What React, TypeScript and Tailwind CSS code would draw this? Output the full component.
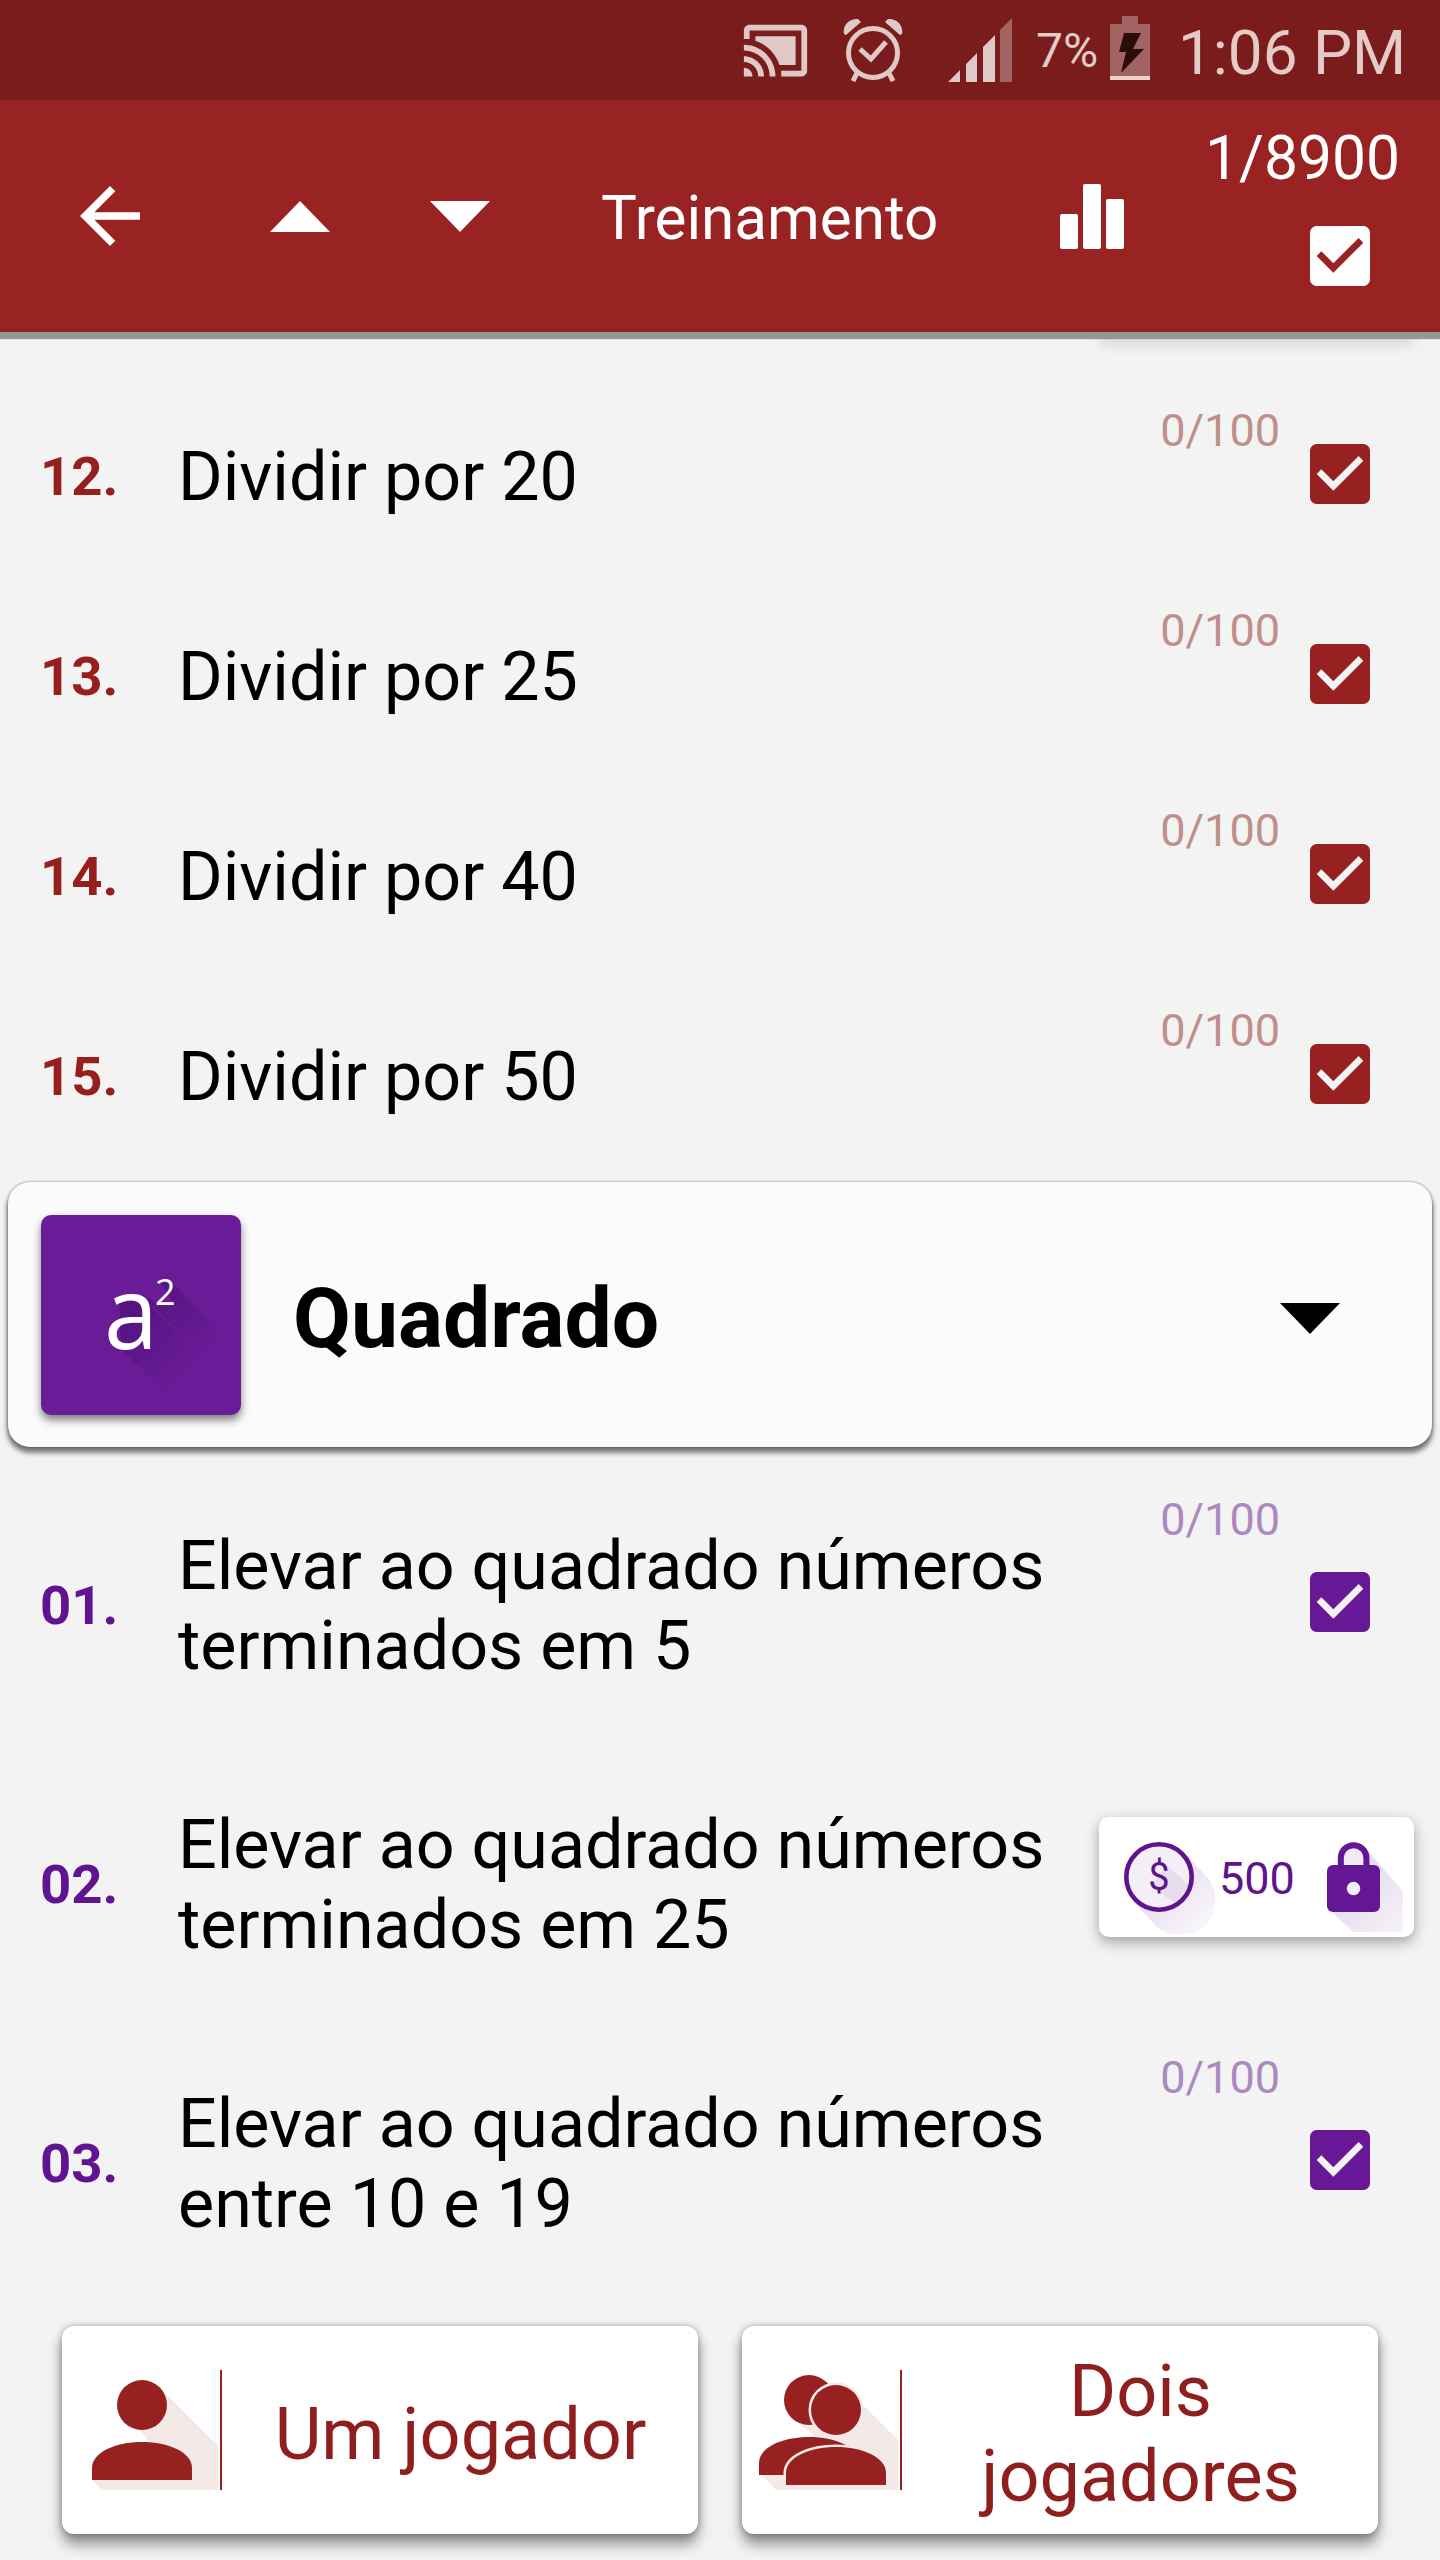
import { MdArrowBack, MdCastConnected, MdCheckBox } from "react-icons/md"

type Lesson = {
    number: string
    title: string
    locked?: boolean
}

const divisions: Lesson[] = [
    { number: "12.", title: "Dividir por 20" },
    { number: "13.", title: "Dividir por 25" },
    { number: "14.", title: "Dividir por 40" },
    { number: "15.", title: "Dividir por 50" },
]

const squares: Lesson[] = [
    { number: "01.", title: "Elevar ao quadrado números terminados em 5" },
    { number: "02.", title: "Elevar ao quadrado números terminados em 25", locked: true },
    { number: "03.", title: "Elevar ao quadrado números entre 10 e 19" },
]

const AlarmIcon = () => (
    <svg width="60" height="64" viewBox="0 0 60 64" fill="none" stroke="#dfc9c6">
        <circle cx="30" cy="35" r="24.5" strokeWidth="5" />
        <path d="M17 31l11 10 15-17" strokeWidth="5" />
        <path d="M14 55l-4 8M46 55l4 8" strokeWidth="5" />
        <path d="M1 16C-1 7 7 0 15 1l3 3L3 17zM59 16C61 7 53 0 45 1l-3 3 15 13z" fill="#dfc9c6" stroke="none" />
    </svg>
)

const SignalIcon = () => (
    <svg width="64" height="64" viewBox="0 0 64 64" fill="#dfc9c6">
        <path d="M0 64L12 52v12zM18 46l11-11v29H18zM35 29l12-12v47H35z" />
        <path d="M52 12L64 0v64H52z" fill="#a26462" />
    </svg>
)

const BatteryIcon = () => (
    <svg width="40" height="64" viewBox="0 0 40 64">
        <path d="M12 0h16v8h12v52H0V8h12z" fill="#a26462" />
        <path d="M0 60h40v4H0z" fill="#ecd2cf" />
        <path d="M14 17h17l-8 16h11L11 57l5-21H9z" fill="#2c0d0b" />
    </svg>
)

const Triangle = ({ up = false, className = "" }: { up?: boolean; className?: string }) => (
    <svg width="60" height="31" viewBox="0 0 60 31" fill="currentColor" className={className}>
        <path d={up ? "M0 31L30 0l30 31z" : "M0 0h60L30 31z"} />
    </svg>
)

const BarsIcon = () => (
    <svg width="64" height="65" viewBox="0 0 64 65" fill="#fff">
        <rect y="30" width="18" height="35" rx="2" />
        <rect x="23" width="18" height="65" rx="2" />
        <rect x="46" y="15" width="18" height="50" rx="2" />
    </svg>
)

const CoinIcon = () => (
    <svg width="92" height="92" viewBox="0 0 92 92">
        <defs>
            <linearGradient id="coin" x1="0" y1="0" x2="1" y2="1">
                <stop offset="0.3" stopColor="#e6dcee" />
                <stop offset="0.95" stopColor="#fbf9fc" />
            </linearGradient>
        </defs>
        <path d="M60 10l20 22a35 35 0 0 1-48 52L10 60z" fill="url(#coin)" />
        <circle cx="35" cy="35" r="32.7" fill="#f3eff6" />
        <path d="M43 24l24 20a32 32 0 0 1-15 18L27 44z" fill="#e6deec" />
        <circle cx="35" cy="35" r="32.7" fill="none" stroke="#5f148c" strokeWidth="4.6" />
        <text x="35" y="48" textAnchor="middle" fontFamily="Roboto" fontSize="38" fill="#5f148c">$</text>
    </svg>
)

const LockIcon = () => (
    <svg width="80" height="92" viewBox="0 0 80 92">
        <defs>
            <linearGradient id="lock" x1="0" y1="0" x2="1" y2="1">
                <stop offset="0.3" stopColor="#e3d9eb" />
                <stop offset="1" stopColor="#f7f3f9" />
            </linearGradient>
        </defs>
        <path d="M38 6l38 43v37q0 4-4 4H26L2 67z" fill="url(#lock)" />
        <path d="M14 24V17a12.7 12.7 0 0 1 25.4 0v7z" fill="#f0eaf4" />
        <path d="M13.8 26V16a12.8 12.8 0 0 1 25.6 0v10" fill="none" stroke="#641794" strokeWidth="6" />
        <rect y="23" width="53" height="47" rx="6" fill="#641794" />
        <circle cx="26.5" cy="46.5" r="6.7" fill="#f3eef6" />
    </svg>
)

const OnePlayerIcon = () => (
    <svg width="130" height="120" viewBox="0 0 130 120" fill="#962120">
        <path d="M75 25l51 51v44H10L0 110l60-34-18-24z" fill="#f3e9e7" />
        <circle cx="50" cy="35" r="25" />
        <path d="M0 110V98C0 82 24 72 50 72s50 10 50 26v12z" />
        <path d="M128 0h2v120h-2z" />
    </svg>
)

const TwoPlayersIcon = () => (
    <svg width="143" height="120" viewBox="0 0 143 120" fill="#962120">
        <path d="M101 32l38 38v50H17L4 106l60-34-26-20 38-14z" fill="#f3e9e7" />
        <circle cx="50" cy="30" r="25" />
        <path d="M0 105V93C0 77 24 67 50 67s50 10 50 26v12z" />
        <g stroke="#f3e9e7" strokeWidth="5" paintOrder="stroke">
            <circle cx="77" cy="40" r="25" />
            <path d="M27 115v-12c0-16 24-26 50-26s50 10 50 26v12z" />
        </g>
        <path d="M141 0h2v120h-2z" />
    </svg>
)

const StatusBar = () => (
    <div className="flex h-[100px] items-center bg-[#7a1c1b] pl-[741px] text-[#e5cbc8]">
        <MdCastConnected size={69} color="#dfc9c6" />
        <div className="ml-[33px]"><AlarmIcon /></div>
        <div className="ml-[45px]"><SignalIcon /></div>
        <span className="ml-[24px] w-[74px] pt-[2px] text-[48px] leading-[56px]">7%</span>
        <div className="pb-1"><BatteryIcon /></div>
        <span className="ml-[28px] pt-[5px] text-[62px] leading-[74px] whitespace-nowrap">1:06 PM</span>
    </div>
)

const Header = () => (
    <div className="relative z-10 flex h-[232px] items-center border-b-[3px] border-[#8b2322] bg-[#982322] pt-[3px] text-white shadow-[0_7px_1px_#929895]">
        <MdArrowBack size={90} className="ml-[65px]" />
        <Triangle up className="ml-[115px]" />
        <Triangle className="ml-[100px]" />
        <span className="ml-[111px] w-[459px] pt-[5px] text-[60.2px] leading-[70px]">Treinamento</span>
        <BarsIcon />
        <div className="flex flex-1 flex-col self-start pt-[21px]">
            <span className="pr-[40px] text-right text-[60.5px] leading-[70px]">1/8900</span>
            <MdCheckBox size={80} className="mt-[22px] mr-[60px] self-end" />
        </div>
    </div>
)

const UnlockButton = () => (
    <div className="mr-[26px] mb-[9px] flex h-[120px] w-[315px] items-start self-center rounded-[10px] bg-white pt-[25px] pl-[25px] shadow-[0_5px_14px_rgba(0,0,0,0.35)]">
        <CoinIcon />
        <span className="mt-[10px] ml-[3px] w-[108px] text-[45px] leading-[54px] text-[#5f148c]">500</span>
        <LockIcon />
    </div>
)

const LessonRow = ({ lesson, height, numberColor, countColor, checkColor }: {
    lesson: Lesson
    height: string
    numberColor: string
    countColor: string
    checkColor: string
}) => (
    <div className={`flex ${height}`}>
        <div className={`w-[178px] self-center pt-[4px] pl-[40px] text-[54.5px] leading-[66px] font-bold ${numberColor}`}>{lesson.number}</div>
        <div className="w-[900px] self-center pt-[6px] text-[68.2px] leading-[80px] text-black">{lesson.title}</div>
        <div className="flex flex-1 justify-end">
            {lesson.locked ? <UnlockButton /> : <>
                <span className={`pt-[30px] pr-[20px] text-[45px] leading-[54px] ${countColor}`}>0/100</span>
                <MdCheckBox size={80} className={`mr-[60px] mb-px shrink-0 self-center ${checkColor}`} />
            </>}
        </div>
    </div>
)

const SectionCard = () => (
    <div className="mx-[8px] mt-[8px] flex h-[265px] items-center rounded-[22px] bg-[#fbfbfb] pl-[33px] shadow-[0_5px_5px_1px_rgba(0,0,0,0.5),0_0_2px_1px_rgba(0,0,0,0.2)]">
        <svg width="200" height="200" viewBox="0 0 200 200" className="rounded-[10px] bg-[#6a1b97] shadow-[0_5px_8px_rgba(0,0,0,0.5)]">
            <defs>
                <linearGradient id="fade" gradientUnits="userSpaceOnUse" x1="100" y1="90" x2="155" y2="145">
                    <stop offset="0" stopColor="#551581" />
                    <stop offset="1" stopColor="#6a1b97" />
                </linearGradient>
            </defs>
            <path d="M78 84l32 0 80 80v34h-46L80 134z" fill="url(#fade)" />
            <path d="M118 66l15 4 67 67v40l-85-85 18-4z" fill="url(#fade)" />
            <path d="M112 92l60 60" stroke="#6a1b97" strokeWidth="2" />
            <text x="63" y="134" fontFamily="Open Sans" fontWeight="500" fontSize="101" fill="#fff" textLength="54" lengthAdjust="spacingAndGlyphs">a</text>
            <text x="114" y="90" fontFamily="Open Sans" fontSize="36" fill="#fff">2</text>
        </svg>
        <span className="ml-[52px] flex-1 pt-[8px] text-[84px] leading-[98px] font-bold text-black">Quadrado</span>
        <Triangle className="mt-[8px] mr-[92px] text-black" />
    </div>
)

const PlayerButtons = () => (
    <div className="flex gap-[44px] pt-[26px] pl-[62px] text-center text-[72px] leading-[85px] text-[#8f1f1e]">
        <div className="flex h-[208px] w-[636px] items-center rounded-[12px] bg-white pl-[30px] shadow-[0_10px_14px_rgba(0,0,0,0.42),0_0_6px_rgba(0,0,0,0.3)]">
            <OnePlayerIcon />
            <span className="flex-1 pt-[9px] pl-px">Um jogador</span>
        </div>
        <div className="flex h-[208px] w-[636px] items-center rounded-[12px] bg-white pl-[17px] shadow-[0_10px_14px_rgba(0,0,0,0.42),0_0_6px_rgba(0,0,0,0.3)]">
            <TwoPlayersIcon />
            <span className="flex-1 pt-[8px] pl-px">Dois<br />jogadores</span>
        </div>
    </div>
)

export default function App() {
    return (
        <div className="h-[2560px] w-[1440px] overflow-hidden bg-[#f2f3f2] font-['Roboto',sans-serif]">
            <StatusBar />
            <Header />
            {/* bottom edge of the unlock button scrolled under the header */}
            <div className="flex h-[42px] justify-end pr-[26px]">
                <div className="h-[4px] w-[315px] rounded-b-[10px] shadow-[0_5px_14px_rgba(0,0,0,0.35)]" />
            </div>
            {divisions.map((lesson) => (
                <LessonRow
                    key={lesson.number}
                    lesson={lesson}
                    height="h-[200px]"
                    numberColor="text-[#961f1e]"
                    countColor="text-[#c08e8b]"
                    checkColor="text-[#962120]"
                />
            ))}
            <SectionCard />
            <div className="pt-[16px]">
                {squares.map((lesson) => (
                    <LessonRow
                        key={lesson.number}
                        lesson={lesson}
                        height="h-[279px]"
                        numberColor="text-[#611491]"
                        countColor="text-[#ab89c0]"
                        checkColor="text-[#671896]"
                    />
                ))}
            </div>
            <PlayerButtons />
        </div>
    )
}
